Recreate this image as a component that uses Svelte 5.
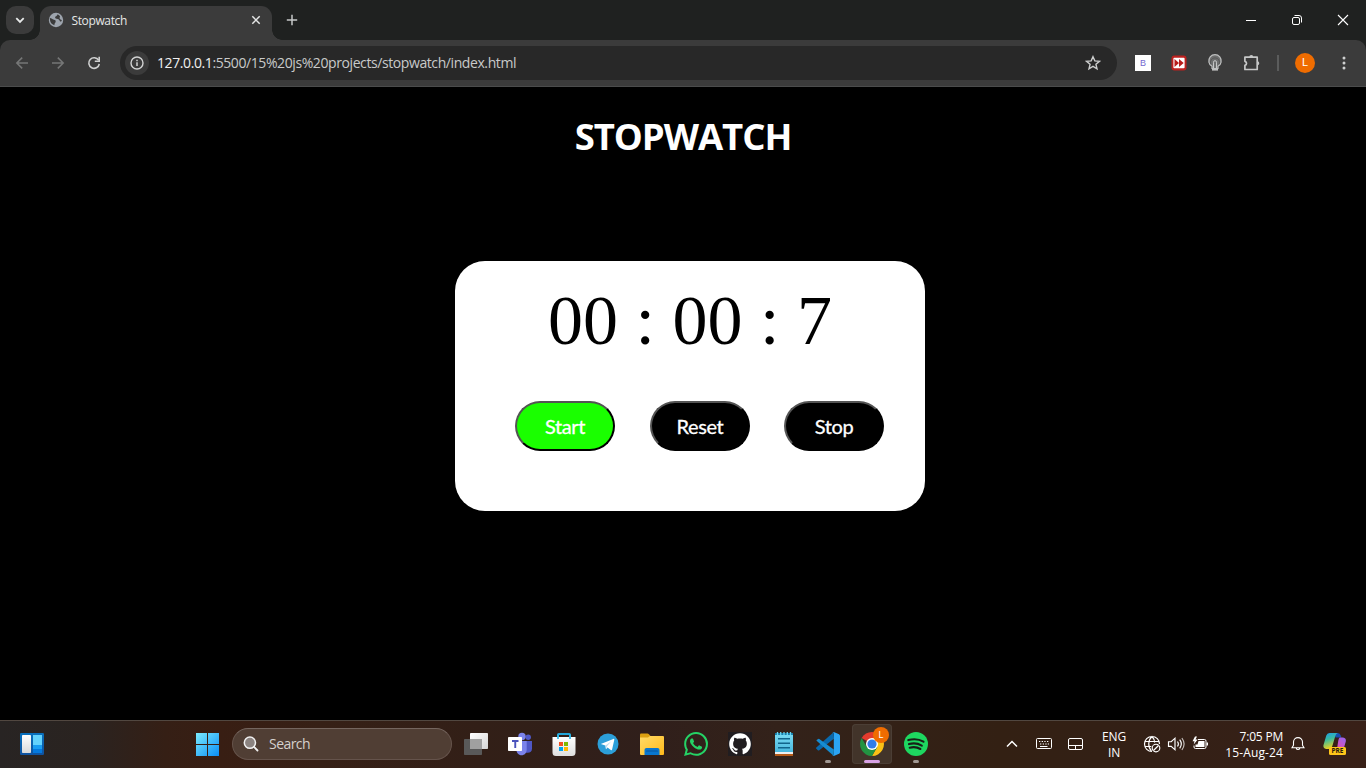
<script>
  const hours = '00';
  const minutes = '00';
  const seconds = '7';
</script>

<div class="screen">
  <header class="tabs">
    <button class="tabsearch" aria-label="Search tabs">
      <svg width="28" height="28" viewBox="0 0 28 28"><path d="M10.3 12.2 14 15.9l3.7-3.7" fill="none" stroke="#e8eaea" stroke-width="1.8" /></svg>
    </button>
    <div class="tab">
      <svg width="16" height="16" viewBox="0 0 16 16">
        <circle cx="8" cy="8" r="7.2" fill="#9da4ad" />
        <path d="M1.9 6.1c1.6.1 2.5 1.5 4 1.6 1.8.1 2 1.3 1.7 2.4-.4 1.3-1.2 1.3-1.2 3.1-2.6-.5-4.7-2.9-4.5-7.1zM9.6 2.2C8.9 4.7 7 4 7.1 5.4c.2 1.6 2.7 1.2 3.8 2 1 .8.7 2.3 2.3 2.2l.7-1.7c-2.3.1-2.7-2.1-2-2.8.5-.5.1-1.7-2.3-2.9z" fill="#3b3b3b" />
      </svg>
      <span class="tabtitle">Stopwatch</span>
      <svg width="16" height="16" viewBox="0 0 16 16"><path d="m4.3 4.3 7.4 7.4m0-7.4-7.4 7.4" stroke="#e4e5e5" stroke-width="1.5" /></svg>
    </div>
    <svg class="plus" width="16" height="16" viewBox="0 0 16 16"><path d="M8 2.8v10.4M2.8 8h10.4" stroke="#c6c8c8" stroke-width="1.5" /></svg>
    <div class="winctl">
      <svg width="46" height="40" viewBox="0 0 46 40"><path d="M18 20.5h10" stroke="#fff" /></svg>
      <svg width="46" height="40" viewBox="0 0 46 40" fill="none" stroke="#fff"><rect x="18.5" y="17.5" width="7" height="7" rx="1.5" /><path d="M20.5 15.5H25a2.5 2.5 0 0 1 2.5 2.5v4.5" /></svg>
      <svg width="46" height="40" viewBox="0 0 46 40"><path d="m18 15 10 10m0-10L18 25" stroke="#fff" stroke-width="1.1" /></svg>
    </div>
  </header>

  <div class="toolbar">
    <div class="nav">
      <svg width="16" height="16" viewBox="0 0 16 16" fill="none" stroke="#767777" stroke-width="1.5"><path d="M14 8H3m5.2-5.4L2.8 8l5.4 5.4" /></svg>
      <svg width="16" height="16" viewBox="0 0 16 16" fill="none" stroke="#767777" stroke-width="1.5"><path d="M2 8h11M7.8 2.6 13.2 8l-5.4 5.4" /></svg>
      <svg width="16" height="16" viewBox="0 0 16 16"><path d="M12.6 5.2A5.3 5.3 0 1 0 13.3 9" fill="none" stroke="#cfd0d0" stroke-width="1.6" /><path d="M14 1.8V7H8.8V5.6h3.6V1.8z" fill="#cfd0d0" /></svg>
    </div>
    <div class="omnibox">
      <span class="info"><svg width="16" height="16" viewBox="0 0 16 16"><circle cx="8" cy="8" r="6" fill="none" stroke="#d2d3d3" stroke-width="1.4" /><path d="M8 7.2V11M8 4.8v1.5" stroke="#d2d3d3" stroke-width="1.5" /></svg></span>
      <span class="url"><b>127.0.0.1</b>:5500/15%20js%20projects/stopwatch/index.html</span>
      <svg width="16" height="16" viewBox="0 0 16 16"><path d="m8 1.7 1.85 4.2 4.6.4-3.5 3 1.05 4.5L8 11.4l-4 2.4 1.05-4.500-3.500-3 4.600-.4z" fill="none" stroke="#cdcece" stroke-width="1.4" /></svg>
    </div>
    <div class="ext">
      <span class="bext">B</span>
      <svg width="16" height="16" viewBox="0 0 16 16"><rect x=".5" y=".5" width="15" height="15" rx="3" fill="#bd211f" /><rect x="2.4" y="2.7" width="11.2" height="10.600" rx="1" fill="#fff" /><path d="M3.5 4 8 8l-4.5 4zm4.5 0 4.7 4L8 12z" fill="#b91d1b" /></svg>
      <svg width="16" height="18" viewBox="0 0 16 18" fill="none" stroke="#bfc0c0"><path d="M5 14.5v-2.2a6.2 6.2 0 1 1 6 0v2.2z" fill="#6d6e6e" stroke-width="1.2" /><path d="M6.5 14V8.2a1.5 1.5 0 0 1 3 0V14" stroke="#c5c6c6" stroke-width="1" /><path d="M3.8 10.3a4.6 4.6 0 1 1 8.4 0" stroke="#505050" stroke-width=".8" /><path d="M5 15.8h6" stroke-width="1.6" /></svg>
      <svg width="18" height="18" viewBox="0 0 18 18"><path d="M1.900 3.200h14.3" stroke="none" /><path d="M1.900 3.200h12.300v12.300H1.900v-4.100a2.100 2.100 0 0 0 0-4.100z" fill="none" stroke="#c6c7c7" stroke-width="1.700" stroke-linejoin="round" /><path d="M6.300 3a2 2 0 0 1 4 0zm8 4.300a2 2 0 0 1 0 4z" fill="#c6c7c7" /></svg>
    </div>
    <i class="sep"></i>
    <span class="avatar">L</span>
    <svg class="more" width="16" height="16" viewBox="0 0 16 16" fill="#cfd0d0"><circle cx="8" cy="2.9" r="1.5" /><circle cx="8" cy="8" r="1.5" /><circle cx="8" cy="13.1" r="1.5" /></svg>
  </div>

  <main>
    <h1>STOPWATCH</h1>
    <section class="card">
      <div class="time">{hours} : {minutes} : {seconds}</div>
      <div class="buttons">
        <button class="btn start">Start</button>
        <button class="btn reset">Reset</button>
        <button class="btn stop">Stop</button>
      </div>
    </section>
  </main>

  <footer>
    <svg class="widgets" width="24" height="24" viewBox="0 0 24 24"><defs><linearGradient id="wf" x2="0" y2="1"><stop stop-color="#0870bd" /><stop offset="1" stop-color="#0f529f" /></linearGradient><linearGradient id="ww" x2="0" y2="1"><stop stop-color="#fff" /><stop offset="1" stop-color="#d9dadb" /></linearGradient></defs><rect y="1" width="24" height="22" rx="1.2" fill="url(#wf)" /><rect x="2" y="3" width="9" height="18" rx=".8" fill="url(#ww)" /><path d="M13 3h9v10h-9z" fill="#63d2fc" /><path d="M13 13h9v4h-9z" fill="#189df2" /><path d="M13 17h9v4h-9z" fill="#0479de" /></svg>
    <svg class="win" width="24" height="24" viewBox="0 0 24 24"><defs><linearGradient id="wg" gradientUnits="userSpaceOnUse" x1="1" y1="1" x2="24" y2="24"><stop stop-color="#7bebff" /><stop offset="1" stop-color="#0a8df4" /></linearGradient></defs><path d="M1 1h11v11H1zm12 0h11v11H13zM1 13h11v11H1zm12 0h11v11H13z" fill="url(#wg)" /></svg>
    <div class="search">
      <svg width="16" height="16" viewBox="0 0 16 16"><circle cx="6.900" cy="6.700" r="5.600" fill="#8b8380" stroke="#f1f1f1" stroke-width="1.500" /><path d="m11 10.900 3.500 3.600" stroke="#f1f1f1" stroke-width="1.800" stroke-linecap="round" /></svg>
      <span>Search</span>
    </div>
    <div class="apps">
      <span class="app"><svg width="24" height="24" viewBox="0 0 24 24"><defs><linearGradient id="tv" x2="1" y2="1"><stop stop-color="#fff" /><stop offset="1" stop-color="#d5d5d5" /></linearGradient></defs><rect x="6" y="1" width="18" height="16" rx=".8" fill="url(#tv)" /><rect y="7" width="18" height="16" rx=".8" fill="#595959" /><path d="M6 7h12v10H6z" fill="#a0a0a0" /></svg></span>
      <span class="app"><svg width="24" height="24" viewBox="0 0 24 24"><circle cx="20.200" cy="5.300" r="2.700" fill="#5059c9" /><path d="M16.500 9H24v7.500c0 3-1.800 4.300-4.300 4.300h-3.200z" fill="#4f57c5" /><circle cx="14" cy="4.500" r="3.700" fill="#7b83eb" /><path d="M9 9h9.700v8.200c0 8-9.700 7.600-10.200 1z" fill="#7b83eb" /><rect y="5" width="14" height="14" rx=".8" fill="#fff" /><path d="M4 8h6.500v1.900H8.200V16H6.300V9.900H4z" fill="#4b53bc" /></svg></span>
      <span class="app"><svg width="24" height="24" viewBox="0 0 24 24"><defs><linearGradient id="st" x2="0" y2="1"><stop stop-color="#fff" /><stop offset="1" stop-color="#dedede" /></linearGradient></defs><path d="M6 6.500V2.700Q6 2 6.700 2h10.600q.7 0 .7.700v3.800" fill="none" stroke="#22a5d9" stroke-width="2" /><path d="M.5 5h23v15.500a3.500 3.500 0 0 1-3.500 3.500H4a3.500 3.500 0 0 1-3.500-3.500z" fill="url(#st)" /><path d="M6 2.500V7m12-4.500V7" stroke="#31bae8" stroke-width="1.700" /><path d="M7 10h4v4H7z" fill="#f25022" /><path d="M12 10h4v4h-4z" fill="#7fba00" /><path d="M7 15h4v4H7z" fill="#00a4ef" /><path d="M12 15h4v4h-4z" fill="#ffb900" /></svg></span>
      <span class="app"><svg width="24" height="24" viewBox="0 0 24 24"><circle cx="12" cy="12" r="10.500" fill="#2c9fd9" /><path d="m4.800 12 12.500-5.100c.8-.3 1.200.1 1 .9l-2.200 9.800c-.2.700-.7.800-1.300.4L11.500 15.600 10 17.300l-.6-3.800z" fill="#fff" /><path d="m9.400 13.500 6-4.200-4.500 4.900-.9 3.100z" fill="#b9dcef" /></svg></span>
      <span class="app"><svg width="24" height="24" viewBox="0 0 24 24"><defs><linearGradient id="fo" x2="1" y2="1"><stop stop-color="#ffdb68" /><stop offset="1" stop-color="#ffb91b" /></linearGradient></defs><path d="M0 6V2.500Q0 1.500 1 1.500h6.500q.7 0 1.200.5L10.500 4v4H0z" fill="#dca011" /><path d="M10 4h13q1 0 1 1v17q0 1-1 1H1q-1 0-1-1V5.500h8z" fill="url(#fo)" /><path d="M4.500 23v-5q0-2 2-2h11q2 0 2 2v5z" fill="#0876cf" /><path d="M7 18.500h10q1 0 1 1H6q0-1 1-1z" fill="#06559d" /></svg></span>
      <span class="app"><svg width="24" height="24" viewBox="0 0 24 24" fill="#25d366"><path d="M17.472 14.382c-.297-.149-1.758-.867-2.030-.967-.273-.099-.471-.148-.670.150-.197.297-.767.966-.940 1.164-.173.199-.347.223-.644.075-.297-.150-1.255-.463-2.390-1.475-.883-.788-1.480-1.761-1.653-2.059-.173-.297-.018-.458.130-.606.134-.133.298-.347.446-.520.149-.174.198-.298.298-.497.099-.198.050-.371-.025-.520-.075-.149-.669-1.612-.916-2.207-.242-.579-.487-.500-.669-.510-.173-.008-.371-.010-.570-.010-.198 0-.520.074-.792.372-.272.297-1.040 1.016-1.040 2.479 0 1.462 1.065 2.875 1.213 3.074.149.198 2.096 3.200 5.077 4.487.709.306 1.262.489 1.694.625.712.227 1.360.195 1.871.118.571-.085 1.758-.719 2.006-1.413.248-.694.248-1.289.173-1.413-.074-.124-.272-.198-.570-.347m-5.421 7.403h-.004a9.870 9.870 0 01-5.031-1.378l-.361-.214-3.741.982.998-3.648-.235-.374a9.860 9.860 0 01-1.510-5.260c.001-5.450 4.436-9.884 9.888-9.884 2.640 0 5.122 1.030 6.988 2.898a9.825 9.825 0 012.893 6.994c-.003 5.450-4.437 9.884-9.885 9.884m8.413-18.297A11.815 11.815 0 0012.050 0C5.495 0 .160 5.335.157 11.892c0 2.096.547 4.142 1.588 5.945L.057 24l6.305-1.654a11.882 11.882 0 005.683 1.448h.005c6.554 0 11.890-5.335 11.893-11.893a11.821 11.821 0 00-3.480-8.413z" /></svg></span>
      <span class="app"><svg width="24" height="24" viewBox="0 0 24 24"><path d="M0 0h24v24H0z" fill="#211d20" /><path transform="translate(1.200 1) scale(.9)" d="M12 .297c-6.630 0-12 5.373-12 12 0 5.303 3.438 9.800 8.205 11.385.600.113.820-.258.820-.577 0-.285-.010-1.040-.015-2.040-3.338.724-4.042-1.610-4.042-1.610C4.422 18.070 3.633 17.700 3.633 17.700c-1.087-.744.084-.729.084-.729 1.205.084 1.838 1.236 1.838 1.236 1.070 1.835 2.809 1.305 3.495.998.108-.776.417-1.305.760-1.605-2.665-.300-5.466-1.332-5.466-5.930 0-1.310.465-2.380 1.235-3.220-.135-.303-.540-1.523.105-3.176 0 0 1.005-.322 3.300 1.230.960-.267 1.980-.399 3-.405 1.020.006 2.040.138 3 .405 2.280-1.552 3.285-1.230 3.285-1.230.645 1.653.240 2.873.120 3.176.765.840 1.230 1.910 1.230 3.220 0 4.610-2.805 5.625-5.475 5.920.420.360.810 1.096.810 2.220 0 1.606-.015 2.896-.015 3.286 0 .315.210.690.825.570C20.565 22.092 24 17.592 24 12.297c0-6.627-5.373-12-12-12" fill="#fff" /></svg></span>
      <span class="app"><svg width="24" height="24" viewBox="0 0 24 24"><defs><linearGradient id="np" x2="0" y2="1"><stop stop-color="#76d9f2" /><stop offset="1" stop-color="#47b6dc" /></linearGradient></defs><path d="M3 20h18v4H3z" fill="#b55a18" /><path d="M3 3h18v18H3z" fill="url(#np)" /><path d="M3 20h18v2H3z" fill="#eee" /><path d="M3 1h18v2H3z" fill="#167eab" /><path d="M5.500 0v3M8.700 0v3M12 0v3m3.300-3v3m3.200-3v3" stroke="#69d4ef" stroke-width="1.300" /><path d="M6 6.700h12M6 11.200h12M6 15.700h12" stroke="#11658b" stroke-width="1.600" /></svg></span>
      <span class="app"><svg width="24" height="24" viewBox="0 0 24 24"><path d="M17.800 0v6.700L3.300 18.300q-.8.500-1.500-.1L.3 16.800q-.6-.7 0-1.400z" fill="#0969ad" /><path d="m.3 8.600 1.500-1.400q.7-.6 1.500-.1l14.500 10.300V24L.3 8.600z" fill="#168cd1" /><path d="m17.800 0 5.200 2.300q1 .5 1 1.500v16.400q0 1-1 1.500L17.800 24q-1 .2-1.700-.6 1.700 1 1.900-1V1.600q-.2-2-1.900-1 .7-.8 1.700-.6z" fill="#2ba4f3" /><path d="m17.800 6.500.2-4h5v19h-5l-.2-4z" fill="#2ba4f3" /></svg><i class="mark"></i></span>
      <span class="app active"><svg width="24" height="24" viewBox="0 0 24 24"><path d="M12 12 1.610 6A12 12 0 0 1 22.390 6z" fill="#e33b2e" /><path d="M22.390 6A12 12 0 0 1 12 24l5.200-9L12 6z" fill="#fbc116" /><path d="M1.610 6A12 12 0 0 0 12 24l5.200-9H6.800z" fill="#229342" /><circle cx="12" cy="12" r="6" fill="#fff" /><circle cx="12" cy="12" r="4.600" fill="#327ce9" /></svg><b class="badge">L</b><i class="mark"></i></span>
      <span class="app"><svg width="24" height="24" viewBox="0 0 24 24"><circle cx="12" cy="12" r="12" fill="#1ed760" /><path d="M4.300 8.100c5.300-1.500 11-.9 15.200 1.600M5 12.100c4.500-1.300 9.100-.7 12.800 1.500M5.700 15.700c3.800-1 7.600-.6 10.700 1.300" fill="none" stroke="#182018" stroke-width="2.100" stroke-linecap="round" /></svg><i class="mark"></i></span>
    </div>
    <div class="tray">
      <svg width="16" height="16" viewBox="0 0 16 16"><path d="m3 10.500 5-5 5 5" fill="none" stroke="#fff" stroke-width="1.500" /></svg>
      <svg class="kb" width="16" height="16" viewBox="0 0 16 16"><rect x=".5" y="2.500" width="15" height="10" rx="1" fill="none" stroke="#fff" /><path d="M3 5.500h1.300m1.400 0H7m1.300 0h1.300m1.400 0h1.300M4 8h1.300m1.400 0H8m1.300 0h1.300m1.200 0H13m-9 2.500h7.500" stroke="#fff" stroke-width="1.200" /></svg>
      <svg class="pad" width="16" height="16" viewBox="0 0 16 16" fill="none" stroke="#fff"><rect x=".5" y="2.500" width="14" height="11" rx="1.500" /><path d="M.5 9.500h14m-7 0v4" /></svg>
      <div class="lang">ENG<br />IN</div>
      <svg class="globe" width="18" height="18" viewBox="0 0 18 18" fill="none" stroke="#fff" stroke-width="1.150"><path d="M9 16.500a7.500 7.500 0 1 1 7.500-7.500M1.800 6.500h14.400M1.800 11.500h6.500M8.500 16.200C4.500 12 5 5 9 1.500c1.700 1.700 2.500 4 2.600 6" /><circle cx="13" cy="13" r="3.800" /><path d="m10.500 15.500 5-5" /></svg>
      <svg class="speaker" width="18" height="18" viewBox="0 0 18 18" fill="none" stroke="#fff" stroke-width="1.150"><path d="M1.500 6.700h2.700L8 3.200v11.600l-3.800-3.500H1.500zM10.500 6.500q1.800 2.500 0 5M12.700 4.700q3.200 4.300 0 8.600" /><path d="M14.900 3q4.400 6 0 12" stroke="#c5bfbb" /></svg>
      <svg class="battery" width="18" height="18" viewBox="0 0 18 18"><path d="M7 4.500h6.500q1.500 0 1.500 1.500v6q0 1.500-1.500 1.500h-9Q3 13.500 3 12v-1.500" fill="none" stroke="#fff" /><path d="M7.500 6h6v6h-9V9.500h2z" fill="#fff" /><path d="M16.300 7.500v3" stroke="#fff" stroke-width="1.400" /><path d="M4 1.500 1.500 6.200h2L2.700 9.500l4-5H4.500L6 1.500z" fill="#fff" /></svg>
      <div class="clock"><span class="t">7:05 PM</span><span class="d">15-Aug-24</span></div>
      <svg class="bell" width="16" height="16" viewBox="0 0 16 16" fill="none" stroke="#fff" stroke-width="1.100"><path d="M2 11.800h12l-1.500-2.600V6.100a4.500 4.500 0 0 0-9 0v3.100zM6.200 12.200a1.900 1.900 0 0 0 3.600 0" /></svg>
      <div class="copilot">
        <svg width="24" height="24" viewBox="0 0 24 24"><defs><linearGradient id="c1" x2=".3" y2="1"><stop stop-color="#1d9bed" /><stop offset=".45" stop-color="#38bba0" /><stop offset="1" stop-color="#e8d122" /></linearGradient><linearGradient id="c2" x1=".8" x2=".2" y2="1"><stop stop-color="#9b63ed" /><stop offset=".6" stop-color="#d453bb" /><stop offset="1" stop-color="#ff7869" /></linearGradient></defs><path d="M11 1h3.500q2.200 0 3 2l1 2.500h-6z" fill="#174fb1" /><path d="M6.500 1h8.300q-1.800.5-2.500 3L9.500 13.500Q8.500 17 5.500 17H3Q-.3 16.500.5 13L3.300 3.500Q4.100 1 6.500 1z" fill="url(#c1)" /><path d="M16.800 5.500H20q3.500.5 2.800 4l-2.500 8.500Q19.500 21 17 21h-6q2-.5 3-4l1.300-8.500q.5-2.500 1.500-3z" fill="url(#c2)" /></svg>
        <b>PRE</b>
      </div>
    </div>
  </footer>
</div>

<style>
  :global(body) { margin: 0; background: #000; overflow: hidden; }
  .screen { width: 1366px; height: 768px; display: flex; flex-direction: column; background: #000; font-family: "Open Sans", "Noto Sans", sans-serif; overflow: hidden; }
  svg { display: block; flex: none; }
  button { padding: 0; border: 0; }

  .tabs { position: relative; z-index: 1; height: 40px; flex: none; display: flex; background: #1f2120; }
  .tabsearch { width: 28px; height: 28px; margin: 6px 6px 0; border-radius: 10px; background: #3b3b3b; }
  .tab { position: relative; width: 232px; height: 34px; margin-top: 6px; padding: 0 8px 6px; box-sizing: border-box; display: flex; align-items: center; background: #3b3b3b; border-radius: 11px 11px 0 0; }
  .tab::before, .tab::after { content: ""; position: absolute; bottom: 0; width: 10px; height: 10px; }
  .tab::before { left: -10px; background: radial-gradient(circle at 0 0, transparent 9.5px, #3b3b3b 10px); }
  .tab::after { right: -10px; background: radial-gradient(circle at 100% 0, transparent 9.5px, #3b3b3b 10px); }
  .tabtitle { flex: 1; margin: 2px 0 0 7.500px; font-size: 12px; line-height: 16px; letter-spacing: -.37px; color: #e6e7e7; }
  .plus { margin: 12px 0 0 12px; }
  .winctl { display: flex; margin-left: auto; }

  .toolbar { height: 47px; flex: none; box-sizing: border-box; display: flex; align-items: center; background: #3b3b3b; border-bottom: 1px solid #4b4c4c; border-radius: 10px 10px 0 0; box-shadow: 0 -10px 0 #1f2120; }
  .nav { display: flex; gap: 20px; margin-left: 14px; }
  .omnibox { width: 997px; height: 34px; box-sizing: border-box; margin-left: 18px; padding: 0 16px 0 5px; border-radius: 17px; background: #282828; display: flex; align-items: center; }
  .info { display: flex; width: 24px; height: 24px; align-items: center; justify-content: center; border-radius: 50%; background: #3b3b3b; }
  .url { flex: 1; margin-left: 8px; font-size: 14px; line-height: 20px; letter-spacing: -.41px; color: #c9caca; white-space: nowrap; }
  .url b { color: #f0f0f0; font-weight: 400; }
  .ext { display: flex; align-items: center; gap: 20px; margin-left: 18px; }
  .bext { width: 16px; height: 16px; background: #fff; color: #7468cf; font: 9px/16px "Liberation Sans", sans-serif; text-align: center; }
  .sep { width: 2px; height: 16px; background: #5b5c5c; margin-left: 16px; }
  .avatar { width: 20px; height: 20px; margin-left: 16px; border-radius: 50%; background: #ef6c00; color: #fff; font: 11px/20px Roboto, sans-serif; text-align: center; }
  .more { margin-left: 21px; }

  main { flex: 1; display: flex; flex-direction: column; align-items: center; }
  h1 { margin: 25px 0 0; height: 50px; font-size: 36.500px; line-height: 49px; font-weight: 700; letter-spacing: -1.050px; color: #fff; }
  .card { width: 470px; height: 250px; margin: 99px 0 0 14px; background: #fff; border-radius: 30px; display: flex; flex-direction: column; }
  .time { height: 80px; margin-top: 20px; font: 70px/80px "Liberation Serif", serif; text-align: center; color: #000; white-space: pre; }
  .buttons { display: flex; margin: 40px 0 0 60px; gap: 35px; }
  .btn { width: 100px; height: 50px; box-sizing: border-box; border: 2px outset #000; border-radius: 25px; background: #000; color: #fff; font: 20px Lato, sans-serif; letter-spacing: -.4px; padding-bottom: 1px; -webkit-text-stroke: .3px #fff; }
  .start { background: #1aff00; }
  .stop { margin-left: -1px; }

  footer { height: 48px; flex: none; box-sizing: border-box; padding-bottom: 1px; border-top: 1px solid #514740; display: flex; align-items: center; color: #fff; background: linear-gradient(90deg, #282423 0, #2a2320 90px, #351f15 165px, #381e13 220px, #362016 320px, #321f17 480px, #301f1b 650px, #33221a 780px, #332013 1000px, #332016 1150px, #382017 1366px); }
  .widgets { margin-left: 20px; }
  .win { margin-left: 151px; }
  .search { width: 220px; height: 32px; box-sizing: border-box; margin-left: 13px; border: 1px solid #65534b; border-top-color: #75665f; border-radius: 16px; background: #503e34; display: flex; align-items: center; padding-left: 10px; }
  .search span { margin-left: 10px; font-size: 14px; line-height: 20px; letter-spacing: -.55px; color: #d5d0cd; }
  .apps { display: flex; margin-left: 2px; }
  .app { position: relative; width: 40px; height: 40px; margin: 0 2px; box-sizing: border-box; display: flex; align-items: center; justify-content: center; border-radius: 4px; }
  .active { background: #42342a; box-shadow: inset 0 0 0 1px #4b3e35; }
  .mark { position: absolute; bottom: 1px; left: 17px; width: 6px; height: 3px; border-radius: 2px; background: #a19893; }
  .active .mark { left: 12px; width: 16px; background: #d9a2e5; }
  .badge { position: absolute; left: 21px; top: 3px; width: 16px; height: 16px; border-radius: 50%; background: #ef6c00; font: 9px/16px Roboto, sans-serif; text-align: center; }
  .tray { display: flex; align-items: center; margin-left: 66px; font-size: 12px; line-height: 16px; }
  .kb { margin-left: 16px; }
  .pad { margin-left: 16px; }
  .lang { width: 30px; margin: 2px 0 0 15px; text-align: center; letter-spacing: -.2px; }
  .globe { margin-left: 14px; }
  .speaker { margin-left: 6px; }
  .battery { margin-left: 6px; }
  .clock { width: 66px; margin: 1px 0 0 8px; display: flex; flex-direction: column; align-items: flex-end; white-space: nowrap; }
  .t { letter-spacing: -.2px; }
  .d { letter-spacing: .12px; }
  .bell { margin-left: 7px; }
  .copilot { position: relative; margin-left: 17px; }
  .copilot b { position: absolute; left: 6px; top: 15px; width: 17px; height: 8px; border-radius: 1.500px; background: #ffc61a; color: #261b0b; font: bold 6.500px/8px "Open Sans", sans-serif; text-align: center; }
</style>
